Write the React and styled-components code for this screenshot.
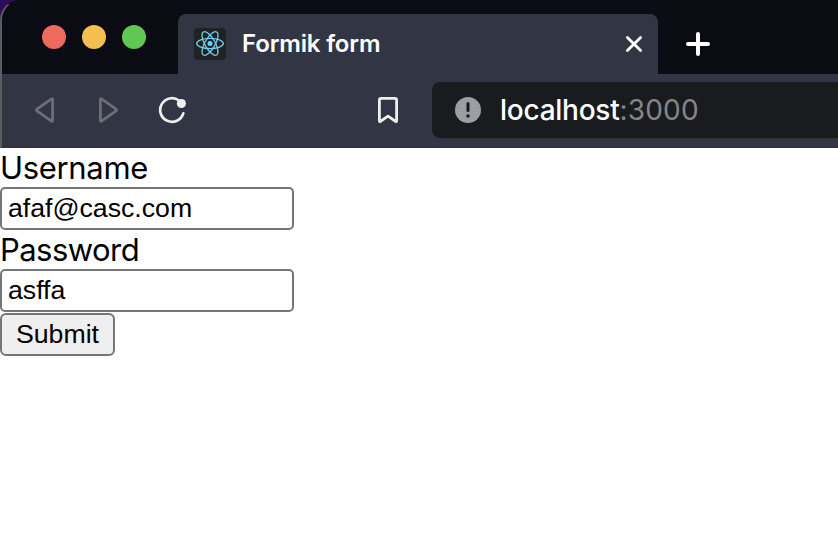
import React from "react";
import styled, { createGlobalStyle } from "styled-components";

const GlobalStyle = createGlobalStyle`
  * { box-sizing: border-box; }
  body { margin: 0; background: #fff; overflow: hidden; }
`;

const Window = styled.div`
  width: 838px;
  height: 538px;
  background: #fff;
  font-family: Inter, "Liberation Sans", sans-serif;
`;

const Desktop = styled.div`
  background: #2b0d59;
`;

const Chrome = styled.header`
  height: 148px;
  overflow: hidden;
  background: #0b0b14;
  border-left: 2px solid #5b5c63;
  border-top: 1px solid transparent;
  border-top-left-radius: 20px;
`;

const TabBar = styled.div`
  height: 73px;
  display: flex;
  align-items: flex-end;
`;

const TrafficLights = styled.div`
  display: flex;
  gap: 16px;
  width: 176px;
  height: 73px;
  padding: 24px 0 0 40px;
`;

const Light = styled.span`
  width: 24px;
  height: 24px;
  border-radius: 50%;
  background: ${(p) => p.$color};
`;

const Tab = styled.div`
  width: 480px;
  height: 60px;
  display: flex;
  align-items: center;
  padding: 0 15px 0 16px;
  border-radius: 8px 8px 0 0;
  background: #323543;
`;

const TabTitle = styled.span`
  flex: 1;
  margin-left: 16px;
  color: #fff;
  font-size: 24px;
  font-weight: 600;
  line-height: 30px;
  letter-spacing: -0.15px;
`;

const NewTab = styled.div`
  height: 60px;
  padding: 17px 0 0 27px;
`;

const Toolbar = styled.nav`
  height: 74px;
  display: flex;
  align-items: center;
  background: #323543;
  padding-bottom: 2px;
  border-bottom: 1px solid #2d2f3d;
`;

const NavIcons = styled.div`
  width: 430px;
  height: 56px;
  display: flex;
  align-items: center;
  padding-left: 28px;
`;

const NavSlot = styled.span`
  display: flex;
  width: 64px;
`;

const BookmarkSlot = styled.span`
  display: flex;
  margin-left: 152px;
`;

const AddressBar = styled.div`
  flex: 1;
  height: 56px;
  display: flex;
  align-items: center;
  padding-left: 22px;
  border-radius: 8px 0 0 8px;
  background: #1a1b1f;
`;

const Address = styled.span`
  margin-left: 18px;
  color: #fff;
  font-size: 28px;
  font-weight: 500;
  line-height: 36px;
  letter-spacing: -0.25px;
`;

const Port = styled.span`
  color: #858587;
  font-weight: 400;
  letter-spacing: 0.2px;
`;

const Form = styled.form`
  display: flex;
  flex-direction: column;
  align-items: flex-start;
`;

const Label = styled.label`
  height: 39px;
  color: #000;
  font-size: 31px;
  line-height: 40px;
  letter-spacing: ${(p) => p.$tracking};
`;

const Input = styled.input`
  width: 294px;
  height: 43px;
  padding: 0 6px 1px;
  border: 2px solid #767676;
  border-radius: 5px;
  background: #fff;
  color: #000;
  font: 26.67px "Liberation Sans", sans-serif;
  outline: none;
`;

const SubmitButton = styled.button`
  width: 115px;
  height: 43px;
  margin-top: 1px;
  padding: 0 0 1px;
  border: 2px solid #767676;
  border-radius: 6px;
  background: #efefef;
  color: #000;
  font: 26.67px "Liberation Sans", sans-serif;
`;

const ReactLogo = () => (
  <svg width="32" height="32" viewBox="0 0 32 32" fill="none">
    <rect width="32" height="32" rx="4" fill="#222" />
    <g stroke="#71cfee" strokeWidth="1.3">
      <ellipse cx="16" cy="15.5" rx="13.3" ry="5.1" />
      <ellipse cx="16" cy="15.5" rx="13.3" ry="5.1" transform="rotate(60 16 15.5)" />
      <ellipse cx="16" cy="15.5" rx="13.3" ry="5.1" transform="rotate(120 16 15.5)" />
    </g>
    <circle cx="16" cy="15.5" r="2.5" fill="#71cfee" />
  </svg>
);

const CloseIcon = () => (
  <svg width="18" height="18" viewBox="0 0 18 18" stroke="#fff" strokeWidth="2.8" strokeLinecap="round">
    <path d="M2.4 2.4 15.6 15.6M15.6 2.4 2.4 15.6" />
  </svg>
);

const PlusIcon = () => (
  <svg width="26" height="26" viewBox="0 0 26 26" stroke="#fff" strokeWidth="4" strokeLinecap="round">
    <path d="M13 3v20M3 13h20" />
  </svg>
);

const BackIcon = () => (
  <svg width="32" height="32" viewBox="0 0 32 32" fill="none" stroke="#6c6e77" strokeWidth="2.8" strokeLinejoin="round">
    <path d="M22.6 5.8v20.4q0 1.6-1.4.7L7.2 17.2q-1.5-1.2 0-2.4L21.2 5.1q1.4-.9 1.4.7Z" />
  </svg>
);

const ForwardIcon = () => (
  <svg width="32" height="32" viewBox="0 0 32 32" fill="none" stroke="#6c6e77" strokeWidth="2.8" strokeLinejoin="round">
    <path d="M6.4 5.8v20.4q0 1.6 1.4.7l14-9.7q1.5-1.2 0-2.4L7.8 5.1q-1.4-.9-1.4.7Z" />
  </svg>
);

const ReloadIcon = () => (
  <svg width="32" height="32" viewBox="0 0 32 32" fill="none">
    <path d="M25.3 19.4A11.8 11.8 0 1 1 21 6.5" stroke="#eeeeef" strokeWidth="2.7" strokeLinecap="round" />
    <circle cx="23.4" cy="9.5" r="4.6" fill="#eeeeef" />
  </svg>
);

const BookmarkIcon = () => (
  <svg width="28" height="28" viewBox="0 0 28 28" fill="none" stroke="#eeeeef" strokeWidth="2.8" strokeLinejoin="round">
    <path d="M7 2.4h14a1.6 1.6 0 0 1 1.6 1.6v21.1q0 .9-.8.4L14 20.2l-7.8 5.3q-.8.5-.8-.4V4A1.6 1.6 0 0 1 7 2.4Z" />
  </svg>
);

const InfoIcon = () => (
  <svg width="28" height="28" viewBox="0 0 28 28">
    <circle cx="14" cy="14" r="13" fill="#9b9fa4" />
    <path d="M14 7.4v7.2" stroke="#1a1b1f" strokeWidth="3" strokeLinecap="round" />
    <circle cx="14" cy="20" r="1.8" fill="#1a1b1f" />
  </svg>
);

export default function App() {
  return (
    <Window>
      <GlobalStyle />
      <Desktop>
        <Chrome>
          <TabBar>
            <TrafficLights>
              <Light $color="#ed6a5f" />
              <Light $color="#f5bf4f" />
              <Light $color="#62c655" />
            </TrafficLights>
            <Tab>
              <ReactLogo />
              <TabTitle>Formik form</TabTitle>
              <CloseIcon />
            </Tab>
            <NewTab>
              <PlusIcon />
            </NewTab>
          </TabBar>
          <Toolbar>
            <NavIcons>
              <NavSlot><BackIcon /></NavSlot>
              <NavSlot><ForwardIcon /></NavSlot>
              <NavSlot><ReloadIcon /></NavSlot>
              <BookmarkSlot><BookmarkIcon /></BookmarkSlot>
            </NavIcons>
            <AddressBar>
              <InfoIcon />
              <Address>localhost<Port>:3000</Port></Address>
            </AddressBar>
          </Toolbar>
        </Chrome>
      </Desktop>
      <Form onSubmit={(e) => e.preventDefault()}>
        <Label htmlFor="username" $tracking="-0.33px">Username</Label>
        <Input id="username" defaultValue="afaf@casc.com" />
        <Label htmlFor="password" $tracking="-0.55px">Password</Label>
        <Input id="password" defaultValue="asffa" />
        <SubmitButton type="submit">Submit</SubmitButton>
      </Form>
    </Window>
  );
}
